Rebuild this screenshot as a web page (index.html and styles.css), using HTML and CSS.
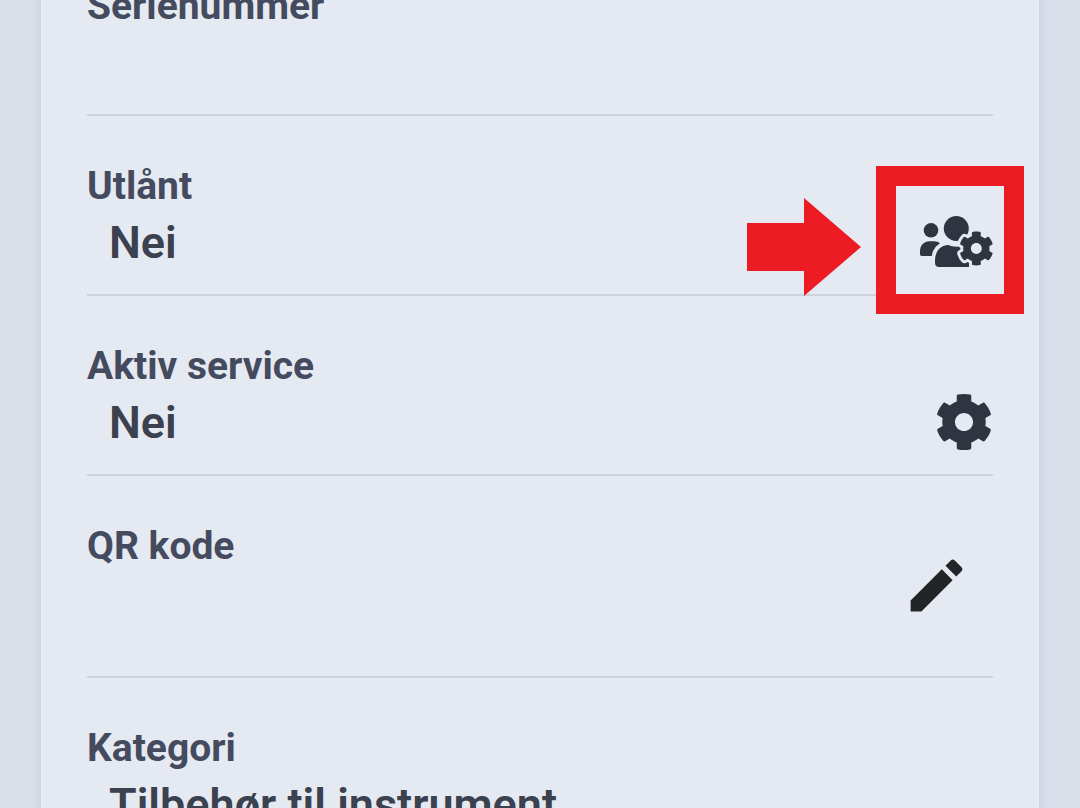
FILE: index.html
```
<!DOCTYPE html>
<html lang="no">
<head>
  <meta charset="UTF-8" />
  <meta name="viewport" content="width=device-width, initial-scale=1.0"/>
  <title>Instrument</title>
  <link rel="stylesheet" href="styles.css">
</head>
<body>

  <main class="card">
    <section class="row">
      <div class="info">
        <h2 class="label">Serienummer</h2>
      </div>
    </section>

    <section class="row">
      <div class="info">
        <h2 class="label">Utlånt</h2>
        <p class="value">Nei</p>
      </div>
      <button type="button" class="icon-btn" aria-label="Utlån">
        <svg class="icon-users" viewBox="0 0 73 52">
          <circle cx="11" cy="14.3" r="7.3"/>
          <circle cx="36.3" cy="12.5" r="12.5"/>
          <path d="M2 40C.7 40 0 39.3 0 38V35.5C0 29.5 4 25.3 9.5 25.3H14C16.300 25.300 18.300 26 20 27.200C15.500 30 12.500 34.500 11.800 40Z"/>
          <path d="M19 51C16.500 51 15 49.500 15 47V44.500C15 35.500 20.500 29 28.500 29C33.500 31.300 38.500 31.300 43.500 29H49V51Z"/>
          <path class="halo" transform="translate(38.800 15) scale(.0685)" d="M487.400 315.700l-42.600-24.600c4.300-23.200 4.300-47 0-70.200l42.600-24.600c4.900-2.800 7.100-8.600 5.500-14-11.100-35.600-30-67.800-54.700-94.600-3.800-4.100-10-5.100-14.800-2.300L380.800 110c-17.900-15.400-38.500-27.300-60.800-35.100V25.800c0-5.600-3.900-10.500-9.400-11.700-36.700-8.200-74.300-7.800-109.200 0-5.500 1.200-9.400 6.100-9.400 11.700V75c-22.200 7.900-42.800 19.800-60.800 35.100L88.700 85.500c-4.900-2.800-11-1.900-14.800 2.300-24.700 26.700-43.600 58.900-54.700 94.600-1.700 5.400.6 11.200 5.500 14L67.300 221c-4.300 23.200-4.300 47 0 70.200l-42.600 24.600c-4.900 2.800-7.100 8.600-5.500 14 11.100 35.600 30 67.800 54.700 94.600 3.800 4.100 10 5.100 14.800 2.300l42.600-24.600c17.900 15.400 38.500 27.300 60.800 35.100v49.200c0 5.600 3.900 10.500 9.400 11.700 36.700 8.200 74.300 7.800 109.200 0 5.500-1.200 9.400-6.100 9.400-11.700v-49.200c22.200-7.900 42.800-19.800 60.800-35.100l42.600 24.600c4.900 2.800 11 1.900 14.800-2.300 24.700-26.700 43.600-58.900 54.700-94.600 1.500-5.500-.7-11.300-5.600-14.100zM256 336c-44.100 0-80-35.900-80-80s35.900-80 80-80 80 35.900 80 80-35.900 80-80 80z"/>
        </svg>
      </button>
      <!-- Highlight around the button -->
      <div class="highlight"></div>
      <svg class="arrow" viewBox="0 0 114 98">
        <path d="M0 25H57V0L114 49L57 98V73H0Z"/>
      </svg>
    </section>

    <section class="row">
      <div class="info">
        <h2 class="label">Aktiv service</h2>
        <p class="value">Nei</p>
      </div>
      <button type="button" class="icon-btn" aria-label="Service">
        <svg class="icon-cog" viewBox="0 0 512 512">
          <path d="M487.400 315.700l-42.600-24.600c4.300-23.200 4.300-47 0-70.200l42.600-24.600c4.900-2.800 7.100-8.600 5.500-14-11.100-35.600-30-67.800-54.700-94.600-3.800-4.100-10-5.100-14.800-2.300L380.800 110c-17.900-15.400-38.500-27.300-60.800-35.100V25.800c0-5.600-3.900-10.500-9.400-11.700-36.700-8.200-74.300-7.800-109.200 0-5.500 1.200-9.400 6.100-9.400 11.700V75c-22.200 7.900-42.800 19.800-60.800 35.100L88.700 85.500c-4.900-2.800-11-1.900-14.800 2.300-24.700 26.700-43.600 58.900-54.700 94.600-1.700 5.400.6 11.200 5.500 14L67.300 221c-4.300 23.200-4.300 47 0 70.200l-42.600 24.600c-4.900 2.800-7.100 8.600-5.500 14 11.100 35.600 30 67.800 54.700 94.600 3.800 4.100 10 5.100 14.800 2.300l42.600-24.600c17.900 15.400 38.500 27.300 60.800 35.100v49.200c0 5.600 3.900 10.500 9.400 11.700 36.700 8.200 74.300 7.800 109.200 0 5.500-1.200 9.400-6.100 9.400-11.700v-49.200c22.200-7.900 42.800-19.800 60.800-35.100l42.600 24.600c4.900 2.800 11 1.900 14.800-2.300 24.700-26.700 43.600-58.900 54.700-94.600 1.500-5.500-.7-11.300-5.600-14.100zM256 336c-44.100 0-80-35.900-80-80s35.900-80 80-80 80 35.900 80 80-35.900 80-80 80z"/>
        </svg>
      </button>
    </section>

    <section class="row">
      <div class="info">
        <h2 class="label">QR kode</h2>
      </div>
      <button type="button" class="icon-btn edit-btn" aria-label="Rediger QR kode">
        <svg class="icon-pencil" viewBox="0 0 24 24">
          <path d="M20.710 7.040c.39-.39.39-1.040 0-1.410l-2.340-2.340c-.37-.39-1.020-.39-1.410 0l-1.840 1.830 3.750 3.750M3 17.250V21h3.750L17.600 10.140l-3.750-3.750L3 17.250z"/>
        </svg>
      </button>
    </section>

    <section class="row">
      <div class="info">
        <h2 class="label">Kategori</h2>
        <p class="value">Tilbehør til instrument</p>
      </div>
    </section>
  </main>

</body>
</html>
```
FILE: styles.css
```
* {
  margin: 0;
  padding: 0;
  box-sizing: border-box;
  font-family: Roboto, 'Liberation Sans', sans-serif;
}

body {
  background-color: #d8dfe9;
  height: 100vh;
  overflow: hidden;
}

.card {
  background-color: #e5e9f1;
  margin: -64px 41px 0;
  padding: 0 45px;
  border: 1px solid #e8edf4;
  border-width: 0 1px;
  box-shadow: 0 0 8px #c4cce0;
}

.row {
  position: relative;
  display: flex;
  justify-content: space-between;
  align-items: flex-end;
  padding: 46px 0 22px;
  border-bottom: 2px solid #cdd2dd;
}

.info {
  align-self: flex-start;
  min-height: 110px;
}

.label {
  font-size: 39px;
  line-height: 48px;
  font-weight: 700;
  color: #454b5e;
}

.value {
  margin-top: 5px;
  padding-left: 22px;
  font-size: 45px;
  line-height: 56px;
  font-weight: 600;
  color: #3b414f;
}

.icon-btn {
  display: flex;
  align-items: center;
  height: 60px;
  background: none;
  border: none;
  cursor: pointer;
}

.icon-btn svg {
  display: block;
  fill: #2e3440;
}

.icon-users {
  width: 73px;
  height: 52px;
}

.icon-users .halo {
  stroke: #e5e9f1;
  stroke-width: 84px;
  paint-order: stroke;
}

.icon-cog {
  width: 58px;
  height: 58px;
}

.edit-btn {
  height: 132px;
  padding: 0 22px 6px;
}

.icon-btn .icon-pencil {
  width: 69px;
  height: 69px;
  fill: #222426;
}

.highlight {
  position: absolute;
  top: 50px;
  right: -31px;
  width: 148px;
  height: 148px;
  border: 20px solid #ed1c24;
  pointer-events: none;
  z-index: 1;
}

.arrow {
  position: absolute;
  top: 82px;
  right: 132px;
  width: 114px;
  height: 98px;
  fill: #ed1c24;
  z-index: 1;
}
```
